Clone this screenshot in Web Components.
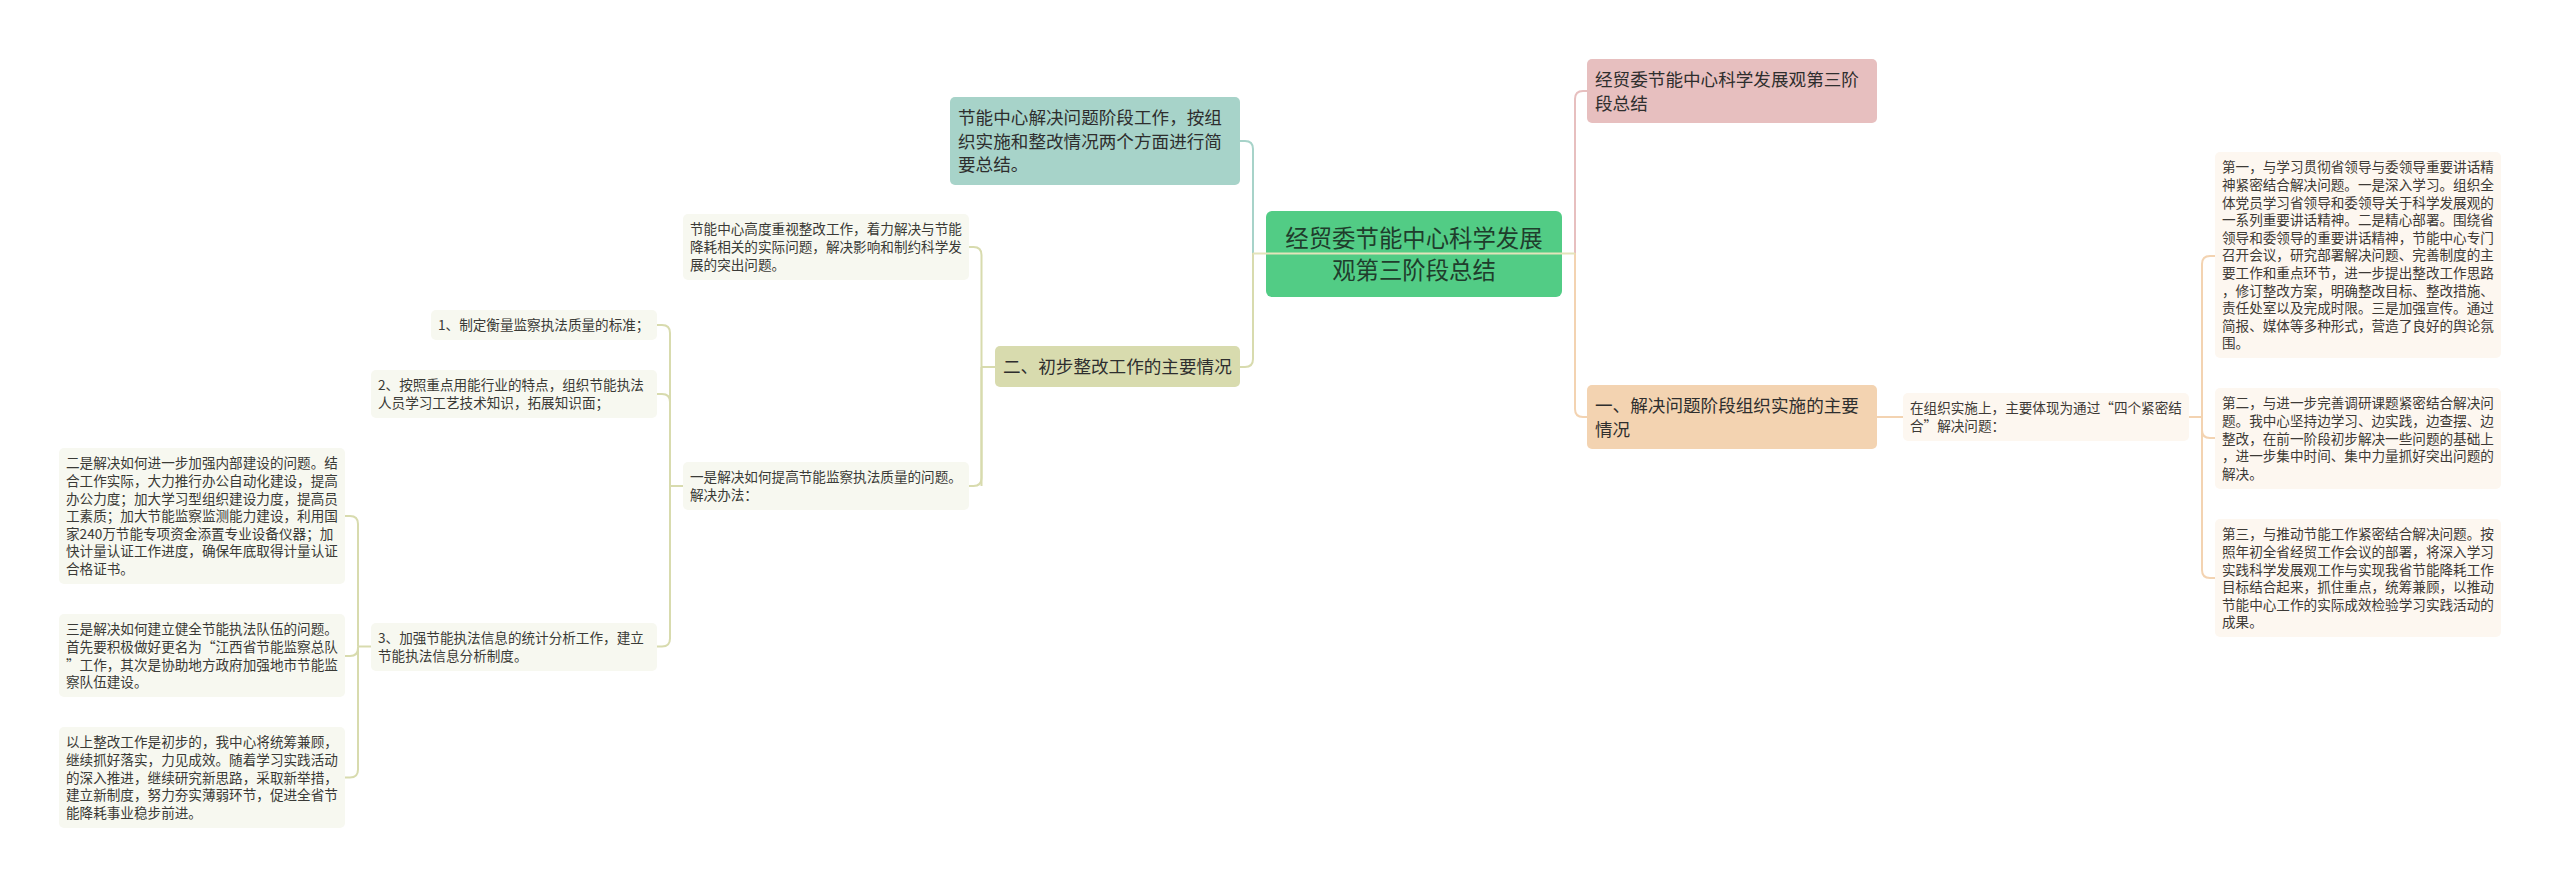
<!DOCTYPE html>
<html lang="zh-CN">
<head>
<meta charset="utf-8">
<title>经贸委节能中心科学发展观第三阶段总结</title>
<style>
html,body{margin:0;background:#fff}
body{font-family:"Noto Sans CJK SC","Noto Sans",sans-serif;color:#333}
</style>
</head>
<body>
<template id="node-t">
<style>
:host{display:block;position:absolute;box-sizing:border-box;left:var(--x);top:var(--y);width:var(--w);white-space:nowrap;font-size:13.6px;line-height:17.6px;padding:6.4px 7px;border-radius:5px;background:#f7f8f0;color:#3a3a36;font-family:"Noto Sans CJK SC","Noto Sans",sans-serif}
:host([kind=warm]){background:#fdf7f0;color:#3d3a36}
:host([kind=teal]),:host([kind=olive]),:host([kind=pink]),:host([kind=orange]){font-size:17.6px;line-height:23.5px;padding:8px 8px 9px;border-radius:5px;color:#2e2e2e}
:host([kind=teal]){background:#a7d3c9}
:host([kind=olive]){background:#d8dbae}
:host([kind=pink]){background:#e7bfbf}
:host([kind=orange]){background:#f3d3b1}
:host([kind=root]){background:#52cc85;color:#1f3d2c;font-size:23.4px;line-height:31.6px;padding:11.4px 8px;text-align:center;border-radius:6px}
</style>
<slot></slot>
</template>
<template id="links-t">
<style>
:host{display:block;position:absolute;inset:0;pointer-events:none;z-index:1}
svg{display:block;width:100%;height:100%}
path{fill:none;stroke-width:2}
.teal{stroke:#a7d3c9}.olive{stroke:#d8dbae}.pink{stroke:#e7bfbf}.orange{stroke:#f3d3b1}
.over{stroke:#e4e4bb}
</style>
<svg viewBox="0 0 2560 887" xmlns="http://www.w3.org/2000/svg"></svg>
</template>
<template id="map-t">
<style>
:host{display:block;position:relative;width:2560px;height:887px;overflow:hidden;background:#fff}
</style>
<slot></slot>
</template>

<mind-map>
<mind-links></mind-links>

<mind-node kind="root" x="1266" y="211" w="296">经贸委节能中心科学发展<br>观第三阶段总结</mind-node>

<mind-node kind="teal" x="950" y="97" w="290">节能中心解决问题阶段工作，按组<br>织实施和整改情况两个方面进行简<br>要总结。</mind-node>
<mind-node kind="olive" x="995" y="346" w="245">二、初步整改工作的主要情况</mind-node>
<mind-node kind="pink" x="1587" y="59" w="290">经贸委节能中心科学发展观第三阶<br>段总结</mind-node>
<mind-node kind="orange" x="1587" y="385" w="290">一、解决问题阶段组织实施的主要<br>情况</mind-node>

<mind-node x="683" y="214" w="286">节能中心高度重视整改工作，着力解决与节能<br>降耗相关的实际问题，解决影响和制约科学发<br>展的突出问题。</mind-node>
<mind-node x="683" y="462" w="286">一是解决如何提高节能监察执法质量的问题。<br>解决办法：</mind-node>

<mind-node x="431" y="310" w="226">1、制定衡量监察执法质量的标准；</mind-node>
<mind-node x="371" y="370" w="286">2、按照重点用能行业的特点，组织节能执法<br>人员学习工艺技术知识，拓展知识面；</mind-node>
<mind-node x="371" y="623" w="286">3、加强节能执法信息的统计分析工作，建立<br>节能执法信息分析制度。</mind-node>

<mind-node x="59" y="448" w="286">二是解决如何进一步加强内部建设的问题。结<br>合工作实际，大力推行办公自动化建设，提高<br>办公力度；加大学习型组织建设力度，提高员<br>工素质；加大节能监察监测能力建设，利用国<br>家240万节能专项资金添置专业设备仪器；加<br>快计量认证工作进度，确保年底取得计量认证<br>合格证书。</mind-node>
<mind-node x="59" y="614" w="286">三是解决如何建立健全节能执法队伍的问题。<br>首先要积极做好更名为“江西省节能监察总队<br>”工作，其次是协助地方政府加强地市节能监<br>察队伍建设。</mind-node>
<mind-node x="59" y="727" w="286">以上整改工作是初步的，我中心将统筹兼顾，<br>继续抓好落实，力见成效。随着学习实践活动<br>的深入推进，继续研究新思路，采取新举措，<br>建立新制度，努力夯实薄弱环节，促进全省节<br>能降耗事业稳步前进。</mind-node>

<mind-node kind="warm" x="1903" y="393" w="286">在组织实施上，主要体现为通过“四个紧密结<br>合”解决问题：</mind-node>
<mind-node kind="warm" x="2215" y="152" w="286">第一，与学习贯彻省领导与委领导重要讲话精<br>神紧密结合解决问题。一是深入学习。组织全<br>体党员学习省领导和委领导关于科学发展观的<br>一系列重要讲话精神。二是精心部署。围绕省<br>领导和委领导的重要讲话精神，节能中心专门<br>召开会议，研究部署解决问题、完善制度的主<br>要工作和重点环节，进一步提出整改工作思路<br>，修订整改方案，明确整改目标、整改措施、<br>责任处室以及完成时限。三是加强宣传。通过<br>简报、媒体等多种形式，营造了良好的舆论氛<br>围。</mind-node>
<mind-node kind="warm" x="2215" y="388" w="286">第二，与进一步完善调研课题紧密结合解决问<br>题。我中心坚持边学习、边实践，边查摆、边<br>整改，在前一阶段初步解决一些问题的基础上<br>，进一步集中时间、集中力量抓好突出问题的<br>解决。</mind-node>
<mind-node kind="warm" x="2215" y="519" w="286">第三，与推动节能工作紧密结合解决问题。按<br>照年初全省经贸工作会议的部署，将深入学习<br>实践科学发展观工作与实现我省节能降耗工作<br>目标结合起来，抓住重点，统筹兼顾，以推动<br>节能中心工作的实际成效检验学习实践活动的<br>成果。</mind-node>
</mind-map>

<script>
class MindMap extends HTMLElement{
  constructor(){super();this.attachShadow({mode:'open'}).appendChild(document.getElementById('map-t').content.cloneNode(true));}
}
class MindNode extends HTMLElement{
  constructor(){super();this.attachShadow({mode:'open'}).appendChild(document.getElementById('node-t').content.cloneNode(true));}
  connectedCallback(){
    for(const k of ['x','y','w']) this.style.setProperty('--'+k,this.getAttribute(k)+'px');
  }
}
class MindLinks extends HTMLElement{
  constructor(){
    super();
    const root=this.attachShadow({mode:'open'});
    root.appendChild(document.getElementById('links-t').content.cloneNode(true));
    const svg=root.querySelector('svg');
    const r=8;
    const elbow=(x0,y0,vx,y1)=>{
      const sx=Math.sign(vx-x0), sy=Math.sign(y1-y0);
      return `M${x0} ${y0}H${vx-sx*r}Q${vx} ${y0} ${vx} ${y0+sy*r}V${y1}`;
    };
    const links=[
      ['teal',elbow(1240,141,1253,253)],
      ['olive',elbow(1240,367,1253,253)],
      ['pink',elbow(1587,91,1575,253)],
      ['orange',elbow(1587,417,1575,253)],
      ['over','M1253 253.5H1575'],
      ['olive',elbow(969,247,981.5,486)],
      ['olive',elbow(969,486,981.5,367)],
      ['olive','M981.5 367H995'],
      ['olive',elbow(657,325,670,486)],
      ['olive',elbow(657,394,670,486)],
      ['olive',elbow(657,646.5,670,486)],
      ['olive','M670 486H683'],
      ['olive',elbow(345,516,358,646.5)],
      ['olive',elbow(345,656,358,646.5)],
      ['olive',elbow(345,777.5,358,646.5)],
      ['olive','M358 646.5H371'],
      ['orange','M1877 417H1903'],
      ['orange',elbow(2215,256,2202,417)],
      ['orange',elbow(2215,438,2202,417)],
      ['orange',elbow(2215,578,2202,417)],
      ['orange','M2189 417H2202']
    ];
    svg.innerHTML=links.map(([c,d])=>`<path class="${c}" d="${d}"/>`).join('');
  }
}
customElements.define('mind-map',MindMap);
customElements.define('mind-node',MindNode);
customElements.define('mind-links',MindLinks);
</script>
</body>
</html>
